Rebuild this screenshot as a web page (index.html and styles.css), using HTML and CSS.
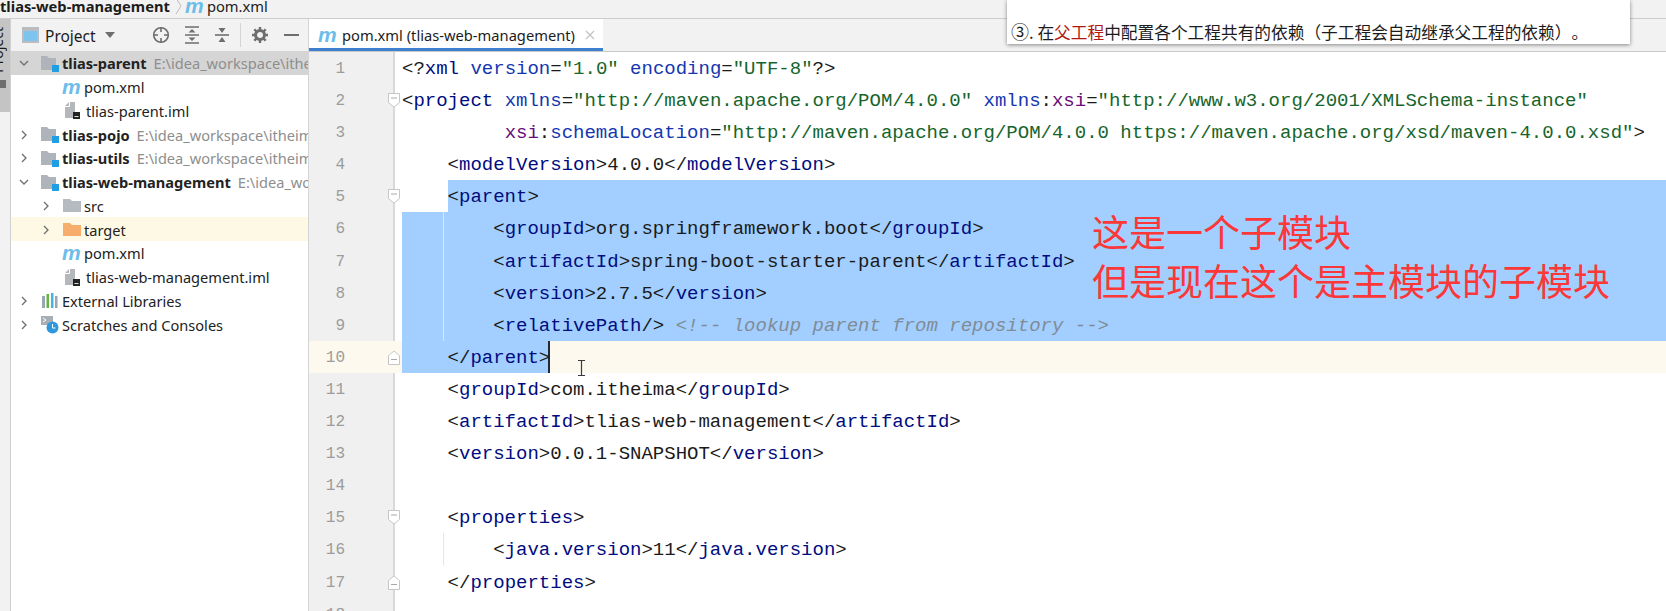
FILE: index.html
```html
<!DOCTYPE html>
<html lang="zh">
<head>
<meta charset="utf-8">
<title>pom.xml (tlias-web-management)</title>
<link rel="stylesheet" href="styles.css">
</head>
<body>
<svg class="defs" width="0" height="0" aria-hidden="true">
  <symbol id="open" viewBox="0 0 12 12"><path d="M2 4l4 4 4-4" fill="none" stroke="#6e6e6e" stroke-width="1.3"/></symbol>
  <symbol id="closed" viewBox="0 0 12 12"><path d="M4 2l4 4-4 4" fill="none" stroke="#6e6e6e" stroke-width="1.3"/></symbol>
  <symbol id="module" viewBox="0 0 18 17"><path d="M0 1h6l2 2h7v8H11v4H0z" fill="#afb4ba"/><rect x="11" y="10" width="7" height="7" fill="#1f9fe2"/></symbol>
  <symbol id="file" viewBox="0 0 18 17"><path d="M1 4l4-4h6v16H1z" fill="#b4b8bd"/><path d="M1 4.500h4.500V0" fill="none" stroke="#fff" stroke-width="1"/><rect x="9" y="10" width="7" height="7" fill="#232323"/><rect x="10.500" y="14" width="4" height="1" fill="#ddd"/></symbol>
  <symbol id="foldtop" viewBox="0 0 12 15"><path d="M.5.500h11v9l-5.500 4.500-5.500-4.500z" fill="#fff" stroke="#c6c6c6"/><path d="M3 5h6" stroke="#a8a8a8"/></symbol>
  <symbol id="foldend" viewBox="0 0 12 15"><path d="M.5 14.500h11v-9L6 1 .5 5.500z" fill="#fff" stroke="#c6c6c6"/><path d="M3 9.500h6" stroke="#a8a8a8"/></symbol>
</svg>

<header class="crumbs">
  <b class="crumb-main">tlias-web-management</b>
  <svg class="crumb-sep" width="8" height="16" viewBox="0 0 8 16"><path d="M1 0l5 8-5 8" fill="none" stroke="#bdbdbd"/></svg>
  <i class="maven crumb-m">m</i>
  <span>pom.xml</span>
</header>

<div class="main">
  <aside class="stripe"><div class="stripe-tab"><span class="stripe-label">Project</span><span class="stripe-mark"></span></div></aside>

  <section class="panel">
    <div class="panel-head">
      <svg class="win-icon" width="17" height="16" viewBox="0 0 17 16"><rect width="17" height="16" fill="#b9bdc2"/><rect x="2" y="4" width="13" height="10" fill="#7cc4ee"/></svg>
      <span class="panel-title">Project</span>
      <svg class="caret-down" width="10" height="6" viewBox="0 0 10 6"><path d="M0 0h10L5 6z" fill="#6e6e6e"/></svg>
      <svg class="tool t-target" width="18" height="18" viewBox="0 0 18 18"><circle cx="9" cy="9" r="7.300" fill="none" stroke="#6e6e6e" stroke-width="1.600"/><path d="M9 1v5M9 12v5M1 9h5M12 9h5" stroke="#6e6e6e" stroke-width="1.600"/></svg>
      <svg class="tool t-expand" width="16" height="18" viewBox="0 0 16 18"><path d="M1 1h14M1 17h14M1 9h14" stroke="#6e6e6e" stroke-width="1.600"/><path d="M8 3l3.500 3.500h-7zM8 15l3.500-3.500h-7z" fill="#6e6e6e"/></svg>
      <svg class="tool t-collapse" width="16" height="18" viewBox="0 0 16 18"><path d="M1 9h14" stroke="#6e6e6e" stroke-width="1.600"/><path d="M8 7L4.500 2h7zM8 11l3.500 5h-7z" fill="#6e6e6e"/></svg>
      <span class="head-div"></span>
      <svg class="tool t-gear" width="16" height="16" viewBox="0 0 16 16"><circle cx="8" cy="8" r="4.500" fill="none" stroke="#6e6e6e" stroke-width="3"/><path d="M8 0v3M8 13v3M0 8h3M13 8h3M2.300 2.300l2.200 2.200M11.500 11.500l2.200 2.200M2.300 13.700l2.200-2.200M11.500 4.500l2.200-2.200" stroke="#6e6e6e" stroke-width="2.400"/></svg>
      <svg class="tool t-minus" width="15" height="2" viewBox="0 0 15 2"><rect width="15" height="2" fill="#6e6e6e"/></svg>
    </div>

    <div class="tree">
      <div class="row d0 selected"><span class="chev"><svg width="12" height="12"><use href="#open"/></svg></span><svg class="ticon" width="18" height="17"><use href="#module"/></svg><b>tlias-parent</b><span class="path">E:\idea_workspace\itheima\tlias-parent</span></div>
      <div class="row d1 leaf"><i class="maven">m</i><span>pom.xml</span></div>
      <div class="row d1 leaf"><svg class="ticon" width="18" height="17"><use href="#file"/></svg><span>tlias-parent.iml</span></div>
      <div class="row d0"><span class="chev"><svg width="12" height="12"><use href="#closed"/></svg></span><svg class="ticon" width="18" height="17"><use href="#module"/></svg><b>tlias-pojo</b><span class="path">E:\idea_workspace\itheima\tlias-pojo</span></div>
      <div class="row d0"><span class="chev"><svg width="12" height="12"><use href="#closed"/></svg></span><svg class="ticon" width="18" height="17"><use href="#module"/></svg><b>tlias-utils</b><span class="path">E:\idea_workspace\itheima\tlias-utils</span></div>
      <div class="row d0"><span class="chev"><svg width="12" height="12"><use href="#open"/></svg></span><svg class="ticon" width="18" height="17"><use href="#module"/></svg><b>tlias-web-management</b><span class="path">E:\idea_workspace\itheima</span></div>
      <div class="row d1"><span class="chev"><svg width="12" height="12"><use href="#closed"/></svg></span><svg class="ticon" width="18" height="13" viewBox="0 0 18 13"><path d="M0 0h7l2 2h9v11H0z" fill="#b6bbc1"/></svg><span>src</span></div>
      <div class="row d1 excluded"><span class="chev"><svg width="12" height="12"><use href="#closed"/></svg></span><svg class="ticon" width="18" height="13" viewBox="0 0 18 13"><path d="M0 0h7l2 2h9v11H0z" fill="#f7ae6c"/></svg><span>target</span></div>
      <div class="row d1 leaf"><i class="maven">m</i><span>pom.xml</span></div>
      <div class="row d1 leaf"><svg class="ticon" width="18" height="17"><use href="#file"/></svg><span>tlias-web-management.iml</span></div>
      <div class="row d0"><span class="chev"><svg width="12" height="12"><use href="#closed"/></svg></span><svg class="ticon" width="18" height="15" viewBox="0 0 18 15"><path d="M1 3h3v12H1z" fill="#9aa7b0"/><path d="M5.500 1h2.500v14H5.500z" fill="#62b543"/><path d="M10 0h2.500v15H10z" fill="#40b6e0"/><path d="M14 3h2.500v12H14z" fill="#9aa7b0"/></svg><span>External Libraries</span></div>
      <div class="row d0"><span class="chev"><svg width="12" height="12"><use href="#closed"/></svg></span><svg class="ticon" width="18" height="18" viewBox="0 0 18 18"><rect y="0" width="12" height="9" fill="#a9aeb4"/><path d="M2 2l3 2-3 2" fill="none" stroke="#fff"/><circle cx="11.500" cy="11.500" r="6" fill="#2f97dc"/><path d="M11.500 8v4h3" fill="none" stroke="#fff"/></svg><span>Scratches and Consoles</span></div>
    </div>
  </section>

  <section class="editor">
    <div class="tabs">
      <div class="tab"><i class="maven">m</i><span>pom.xml (tlias-web-management)</span>
        <svg class="tab-x" width="10" height="10" viewBox="0 0 10 10"><path d="M1 1l8 8M9 1l-8 8" stroke="#c4c4c4" stroke-width="1.300"/></svg>
      </div>
    </div>
    <div class="lines">
      <div class="line"><span class="num">1</span><div class="code"><span>&lt;?<span class="t">xml</span> <span class="a">version</span>=<span class="v">"1.0"</span> <span class="a">encoding</span>=<span class="v">"UTF-8"</span>?&gt;</span></div></div>
      <div class="line"><span class="num">2</span><svg class="fold" width="12" height="15"><use href="#foldtop"/></svg><div class="code"><span>&lt;<span class="t">project</span> <span class="a">xmlns</span>=<span class="v">"http://maven.apache.org/POM/4.0.0"</span> <span class="a">xmlns</span>:<span class="x">xsi</span>=<span class="v">"http://www.w3.org/2001/XMLSchema-instance"</span></span></div></div>
      <div class="line"><span class="num">3</span><div class="code"><span>         <span class="x">xsi</span>:<span class="a">schemaLocation</span>=<span class="v">"http://maven.apache.org/POM/4.0.0 https://maven.apache.org/xsd/maven-4.0.0.xsd"</span>&gt;</span></div></div>
      <div class="line"><span class="num">4</span><div class="code"><span>    &lt;<span class="t">modelVersion</span>&gt;4.0.0&lt;/<span class="t">modelVersion</span>&gt;</span></div></div>
      <div class="line"><span class="num">5</span><svg class="fold" width="12" height="15"><use href="#foldtop"/></svg><div class="code"><span>    </span><span class="fill">&lt;<span class="t">parent</span>&gt;</span></div></div>
      <div class="line"><span class="num">6</span><div class="code"><span class="fill guide">        &lt;<span class="t">groupId</span>&gt;org.springframework.boot&lt;/<span class="t">groupId</span>&gt;</span></div></div>
      <div class="line"><span class="num">7</span><div class="code"><span class="fill guide">        &lt;<span class="t">artifactId</span>&gt;spring-boot-starter-parent&lt;/<span class="t">artifactId</span>&gt;</span></div></div>
      <div class="line"><span class="num">8</span><div class="code"><span class="fill guide">        &lt;<span class="t">version</span>&gt;2.7.5&lt;/<span class="t">version</span>&gt;</span></div></div>
      <div class="line"><span class="num">9</span><div class="code"><span class="fill guide">        &lt;<span class="t">relativePath</span>/&gt; <span class="c">&lt;!-- lookup parent from repository --&gt;</span></span></div></div>
      <div class="line current"><span class="num">10</span><svg class="fold" width="12" height="15"><use href="#foldend"/></svg><div class="code"><span class="sel">    &lt;/<span class="t">parent</span>&gt;</span></div></div>
      <div class="line"><span class="num">11</span><div class="code"><span>    &lt;<span class="t">groupId</span>&gt;com.itheima&lt;/<span class="t">groupId</span>&gt;</span></div></div>
      <div class="line"><span class="num">12</span><div class="code"><span>    &lt;<span class="t">artifactId</span>&gt;tlias-web-management&lt;/<span class="t">artifactId</span>&gt;</span></div></div>
      <div class="line"><span class="num">13</span><div class="code"><span>    &lt;<span class="t">version</span>&gt;0.0.1-SNAPSHOT&lt;/<span class="t">version</span>&gt;</span></div></div>
      <div class="line"><span class="num">14</span><div class="code"></div></div>
      <div class="line"><span class="num">15</span><svg class="fold" width="12" height="15"><use href="#foldtop"/></svg><div class="code"><span>    &lt;<span class="t">properties</span>&gt;</span></div></div>
      <div class="line"><span class="num">16</span><div class="code"><span class="fill guide-plain">        &lt;<span class="t">java.version</span>&gt;11&lt;/<span class="t">java.version</span>&gt;</span></div></div>
      <div class="line"><span class="num">17</span><svg class="fold" width="12" height="15"><use href="#foldend"/></svg><div class="code"><span>    &lt;/<span class="t">properties</span>&gt;</span></div></div>
      <div class="line"><span class="num">18</span><div class="code"></div></div>
    </div>
  </section>
</div>

<div class="note"><span class="circled">③</span><span class="dot">.</span> 在<span class="red">父工程</span>中配置各个工程共有的依赖（子工程会自动继承父工程的依赖）。</div>
<div class="remark">这是一个子模块<br>但是现在这个是主模块的子模块</div>
<svg class="ibeam" width="9" height="16" viewBox="0 0 9 16"><path d="M1 .5h7M1 15.500h7M4.500 1v14" stroke="#3a3a3a" stroke-width="1.200" fill="none"/></svg>
</body>
</html>
```

FILE: styles.css
```css
* { box-sizing: border-box; }
html, body { margin: 0; padding: 0; }
body {
  position: relative;
  width: 1666px;
  height: 611px;
  overflow: hidden;
  background: #fff;
  color: #1c1c1c;
  font-family: "Noto Sans", "Noto Sans CJK SC", sans-serif;
  font-size: 14px;
}
.defs { position: absolute; }

.maven {
  font-family: "Liberation Sans", sans-serif;
  font-weight: 700;
  font-style: italic;
  font-size: 21px;
  line-height: 16px;
  color: #6cbde9;
  width: 18px;
  flex: none;
}

/* breadcrumb */
.crumbs {
  height: 19px;
  display: flex;
  align-items: center;
  background: #f2f2f2;
  border-bottom: 1px solid #cdcdcd;
  font-size: 14.700px;
  line-height: 12px;
  padding-bottom: 6px;
  overflow: hidden;
}
.crumb-main { font-weight: 700; }
.crumb-sep { margin: 0 2px 0 5px; }
.crumb-m { margin-right: 4px; }

.main { display: flex; height: 592px; }

/* tool stripe */
.stripe {
  width: 11px;
  flex: none;
  background: #f2f2f2;
  border-right: 1px solid #d0d0d0;
}
.stripe-tab {
  height: 93px;
  background: #c4c4c4;
  position: relative;
  overflow: hidden;
}
.stripe-label {
  position: absolute;
  top: 8px;
  left: -9px;
  writing-mode: vertical-rl;
  transform: rotate(180deg);
  font-size: 14px;
  line-height: 14px;
}
.stripe-mark {
  position: absolute;
  left: 0;
  top: 61px;
  width: 6px;
  height: 8px;
  background: #6e6e6e;
}

/* project panel */
.panel {
  width: 298px;
  flex: none;
  border-right: 1px solid #d4d4d4;
  overflow: hidden;
}
.panel-head {
  height: 32px;
  display: flex;
  align-items: center;
  background: #f2f2f2;
  padding-left: 11px;
}
.panel-title { margin-left: 6px; padding-top: 1px; font-size: 15.500px; width: 53px; }
.caret-down { margin-left: 7px; }
.tool { flex: none; }
.t-target { margin-left: 37px; }
.t-expand { margin-left: 14px; }
.t-collapse { margin-left: 14px; }
.head-div { width: 1px; height: 24px; background: #d4d4d4; margin-left: 10px; }
.t-gear { margin-left: 11px; }
.t-minus { margin-left: 16px; }

.row {
  height: 23.750px;
  display: flex;
  align-items: center;
  white-space: nowrap;
  overflow: hidden;
  padding-top: 1px;
  font-size: 14.600px;
  color: #222;
}
.row.selected { background: #d5d5d5; }
.row.excluded { background: #fdf9e5; }
.d0 { padding-left: 7px; }
.d1 { padding-left: 29px; }
.d1.leaf { padding-left: 51px; }
.chev { width: 12px; margin-right: 11px; display: flex; flex: none; }
.ticon { flex: none; margin-right: 3px; }
.leaf .ticon { margin-left: 2px; }
.leaf .maven { margin-right: 4px; }
.leaf .ticon + span { margin-left: 1px; }
.row b { font-weight: 700; }
.path { color: #8e8e8e; margin-left: 7px; }

/* editor */
.editor { flex: 1; min-width: 0; }
.tabs {
  height: 33px;
  display: flex;
  background: #f2f2f2;
  border-bottom: 1px solid #c9c9c9;
}
.tab {
  width: 294px;
  height: 32px;
  display: flex;
  align-items: center;
  padding: 3px 0 0 9px;
  background: #fff;
  border-bottom: 3px solid #3f7fcf;
  font-size: 14.700px;
  white-space: nowrap;
}
.tab .maven { margin-right: 6px; }
.tab-x { margin-left: 10px; flex: none; }

.lines {
  height: 559px;
  overflow: hidden;
  background:
    linear-gradient(#f0f0f0, #f0f0f0) 0 0 / 84px 100% no-repeat,
    linear-gradient(#d9d9d9, #d9d9d9) 84px 0 / 2px 100% no-repeat;
}
.line {
  position: relative;
  display: flex;
  height: 32.100px;
  font-family: "Liberation Mono", monospace;
  font-size: 19px;
  line-height: 34px;
  color: #1a1a1a;
}
.num {
  width: 36px;
  margin-right: 57px;
  text-align: right;
  font-size: 16px;
  color: #9c9c9c;
  flex: none;
}
.fold { position: absolute; left: 79px; top: 9px; }
.code {
  flex: 1;
  min-width: 0;
  display: flex;
  white-space: pre;
}
.fill { flex: 1; background: #a2cfff; }
.guide {
  background-image: linear-gradient(#d3e7fd, #d3e7fd);
  background-size: 1px 100%;
  background-position: 41px 0;
  background-repeat: no-repeat;
}
.guide-plain {
  background: linear-gradient(#e6e6e6, #e6e6e6) 41px 0 / 1px 100% no-repeat;
}
.sel { background: #a2cfff; border-right: 2px solid #1d2a3a; width: 148px; }
.current { background: #fdf9ee; }
.t { color: #000c80; }
.a { color: #1437b0; }
.x { color: #660e7a; }
.v { color: #16652c; }
.c { color: #808b96; font-style: italic; }

/* overlays */
.note {
  position: absolute;
  left: 1007px;
  top: 0;
  width: 623px;
  height: 44px;
  padding: 20px 0 0 4px;
  background: #fff;
  box-shadow: 0 1px 4px rgba(0, 0, 0, .45);
  font-family: "Noto Sans CJK SC", sans-serif;
  font-size: 16.700px;
  line-height: 24px;
  color: #1c1c1c;
  white-space: nowrap;
  text-spacing-trim: space-all;
}
.circled { font-size: 18px; line-height: 20px; }
.red { color: #b3170f; }
.remark {
  position: absolute;
  left: 1092px;
  top: 207px;
  font-family: "Noto Sans CJK SC", sans-serif;
  font-size: 37px;
  line-height: 49px;
  color: #fb3737;
  white-space: nowrap;
}
.ibeam { position: absolute; left: 577px; top: 360px; }
```
